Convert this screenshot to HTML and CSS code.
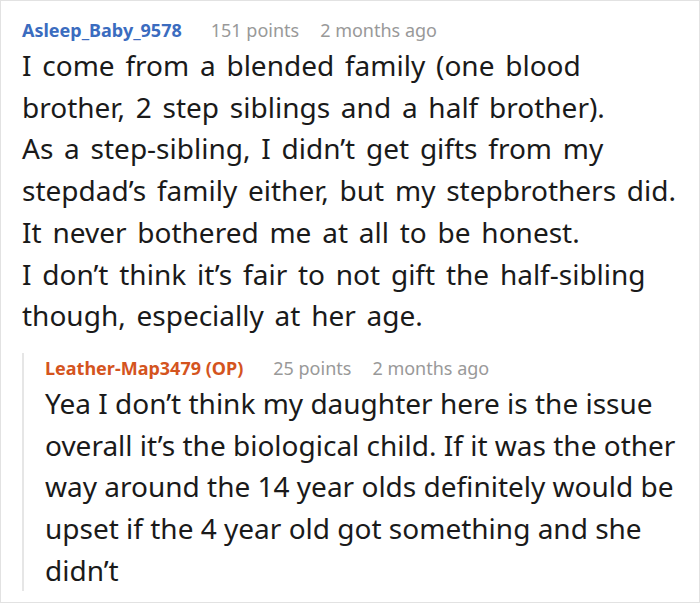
FILE: index.html
```html
<!DOCTYPE html>
<html>
<head>
<meta charset="utf-8">
<link rel="stylesheet" href="styles.css">
</head>
<body>
<div class="frame">
  <div class="comment">
    <div class="meta">
      <span class="author">Asleep_Baby_9578</span>
      <span class="points">151 points</span>
      <span class="time">2 months ago</span>
    </div>
    <div class="body main">
      <p>I come from a blended family (one blood brother, 2 step siblings and a half brother).</p>
      <p>As a step-sibling, I didn’t get gifts from my stepdad’s family either, but my stepbrothers did.</p>
      <p>It never bothered me at all to be honest.</p>
      <p>I don’t think it’s fair to not gift the half-sibling though, especially at her age.</p>
    </div>
    <div class="reply">
      <div class="meta">
        <span class="author op">Leather-Map3479 (OP)</span>
        <span class="points">25 points</span>
        <span class="time">2 months ago</span>
      </div>
      <div class="body">
        <p>Yea I don’t think my daughter here is the issue overall it’s the biological child. If it was the other way around the 14 year olds definitely would be upset if the 4 year old got something and she didn’t</p>
      </div>
    </div>
  </div>
</div>
</body>
</html>
```

FILE: styles.css
```css
html, body {
  margin: 0;
  padding: 0;
  background: #fff;
}
.frame {
  box-sizing: border-box;
  width: 700px;
  height: 603px;
  border: 1px solid #e2e2e2;
  padding: 14px 10px 0 21px;
  font-family: "Noto Sans", sans-serif;
  color: #1a1a1a;
}
.meta {
  display: flex;
  align-items: baseline;
  font-size: 18px;
  line-height: 30px;
}
.author {
  font-weight: bold;
  color: #3b6cbf;
  margin-right: 29px;
}
.author.op {
  color: #d4541e;
  margin-right: 30px;
}
.points, .time {
  color: #999;
}
.points {
  margin-right: 21px;
}
.body {
  font-size: 28px;
  line-height: 41.7px;
}
.body.main {
  max-width: 656px;
  word-spacing: 3.5px;
}
.body p {
  margin: 0;
}
.reply {
  margin-top: 16px;
  border-left: 2px solid #e6e6e6;
  padding-left: 21px;
}
```
